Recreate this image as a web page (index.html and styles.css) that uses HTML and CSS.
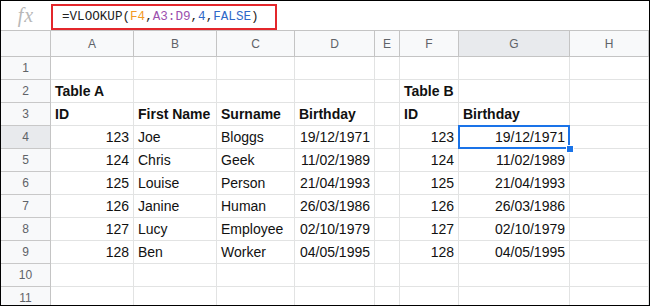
FILE: index.html
```html
<!DOCTYPE html>
<html>
<head>
    <meta charset="UTF-8">
    <title>VLOOKUP</title>
    <link rel="stylesheet" href="styles.css">
</head>
<body>
<div class="frame">
    <div class="fbar">
        <div class="fx">fx</div>
        <div class="formula">=VLOOKUP(<span class="r1">F4</span>,<span class="r2">A3:D9</span>,<span class="lit">4</span>,<span class="lit">FALSE</span>)</div>
    </div>
    <div class="sheet">
        <div class="corner"></div>
        <div class="ch">A</div><div class="ch">B</div><div class="ch">C</div><div class="ch">D</div>
        <div class="ch">E</div><div class="ch">F</div><div class="ch sel">G</div><div class="ch">H</div>

        <div class="rh">1</div>
        <div class="c"></div><div class="c"></div><div class="c"></div><div class="c"></div>
        <div class="c"></div><div class="c"></div><div class="c"></div><div class="c"></div>

        <div class="rh">2</div>
        <div class="c b">Table A</div><div class="c"></div><div class="c"></div><div class="c"></div>
        <div class="c"></div><div class="c b">Table B</div><div class="c"></div><div class="c"></div>

        <div class="rh">3</div>
        <div class="c b">ID</div><div class="c b">First Name</div><div class="c b">Surname</div><div class="c b">Birthday</div>
        <div class="c"></div><div class="c b">ID</div><div class="c b">Birthday</div><div class="c"></div>

        <div class="rh sel">4</div>
        <div class="c n">123</div><div class="c">Joe</div><div class="c">Bloggs</div><div class="c n">19/12/1971</div>
        <div class="c"></div><div class="c n">123</div><div class="c n active">19/12/1971<span class="handle"></span></div><div class="c"></div>

        <div class="rh">5</div>
        <div class="c n">124</div><div class="c">Chris</div><div class="c">Geek</div><div class="c n">11/02/1989</div>
        <div class="c"></div><div class="c n">124</div><div class="c n">11/02/1989</div><div class="c"></div>

        <div class="rh">6</div>
        <div class="c n">125</div><div class="c">Louise</div><div class="c">Person</div><div class="c n">21/04/1993</div>
        <div class="c"></div><div class="c n">125</div><div class="c n">21/04/1993</div><div class="c"></div>

        <div class="rh">7</div>
        <div class="c n">126</div><div class="c">Janine</div><div class="c">Human</div><div class="c n">26/03/1986</div>
        <div class="c"></div><div class="c n">126</div><div class="c n">26/03/1986</div><div class="c"></div>

        <div class="rh">8</div>
        <div class="c n">127</div><div class="c">Lucy</div><div class="c">Employee</div><div class="c n">02/10/1979</div>
        <div class="c"></div><div class="c n">127</div><div class="c n">02/10/1979</div><div class="c"></div>

        <div class="rh">9</div>
        <div class="c n">128</div><div class="c">Ben</div><div class="c">Worker</div><div class="c n">04/05/1995</div>
        <div class="c"></div><div class="c n">128</div><div class="c n">04/05/1995</div><div class="c"></div>

        <div class="rh">10</div>
        <div class="c"></div><div class="c"></div><div class="c"></div><div class="c"></div>
        <div class="c"></div><div class="c"></div><div class="c"></div><div class="c"></div>

        <div class="rh">11</div>
        <div class="c"></div><div class="c"></div><div class="c"></div><div class="c"></div>
        <div class="c"></div><div class="c"></div><div class="c"></div><div class="c"></div>
    </div>
</div>
</body>
</html>
```

FILE: styles.css
```css
body{margin:0;background:#fff;}

.frame{width:650px;height:306px;box-sizing:border-box;border:1px solid #000;overflow:hidden;
    font-family:"Liberation Sans",Arial,sans-serif;}

/* formula bar */
.fbar{display:flex;height:30px;box-sizing:border-box;border-bottom:1px solid #c4c4c4;background:#fff;}
.fx{width:50px;display:flex;align-items:center;justify-content:center;
    font-family:"Liberation Serif","Times New Roman",serif;font-style:italic;font-size:20px;
    letter-spacing:1px;color:#b8b8b8;}
.formula{margin-top:3px;width:226px;height:26px;box-sizing:border-box;border:2px solid #e3262b;
    padding-left:9px;display:flex;align-items:center;
    font-family:"Liberation Mono","Courier New",monospace;font-size:12.6px;color:#222;}
.r1{color:#f29a26;}
.r2{color:#9c4fae;}
.lit{color:#2f68c8;}

/* grid */
.sheet{display:grid;grid-template-columns:50px 83px 83px 78px 80px 25px 59px 111px 1fr;
    grid-template-rows:26px;grid-auto-rows:23px;}
.sheet > div{box-sizing:border-box;}
.corner,.ch,.rh{background:#f8f9fa;border-right:1px solid #c4c4c4;border-bottom:1px solid #c4c4c4;
    color:#5f6368;font-size:12px;display:flex;align-items:center;justify-content:center;}
.ch.sel,.rh.sel{background:#e8eaed;}
.ch{border-right-color:#c4c4c4;}
.rh{border-bottom-color:#c8c8c8;}

.c{border-right:1px solid #e2e3e3;border-bottom:1px solid #e2e3e3;display:flex;align-items:center;
    padding:0 3px 0 4px;font-size:14px;color:#111;white-space:nowrap;overflow:visible;}
.c.b{font-weight:bold;}
.c.n{justify-content:flex-end;padding:0 4px 0 3px;}

.active{position:relative;}
.active:after{content:"";position:absolute;left:-1px;top:-1px;right:-1px;bottom:-1px;
    border:2px solid #1a73e8;}
.handle{position:absolute;right:-5px;bottom:-5px;width:8px;height:8px;box-sizing:border-box;
    background:#1a73e8;border:1px solid #fff;z-index:2;}
```
